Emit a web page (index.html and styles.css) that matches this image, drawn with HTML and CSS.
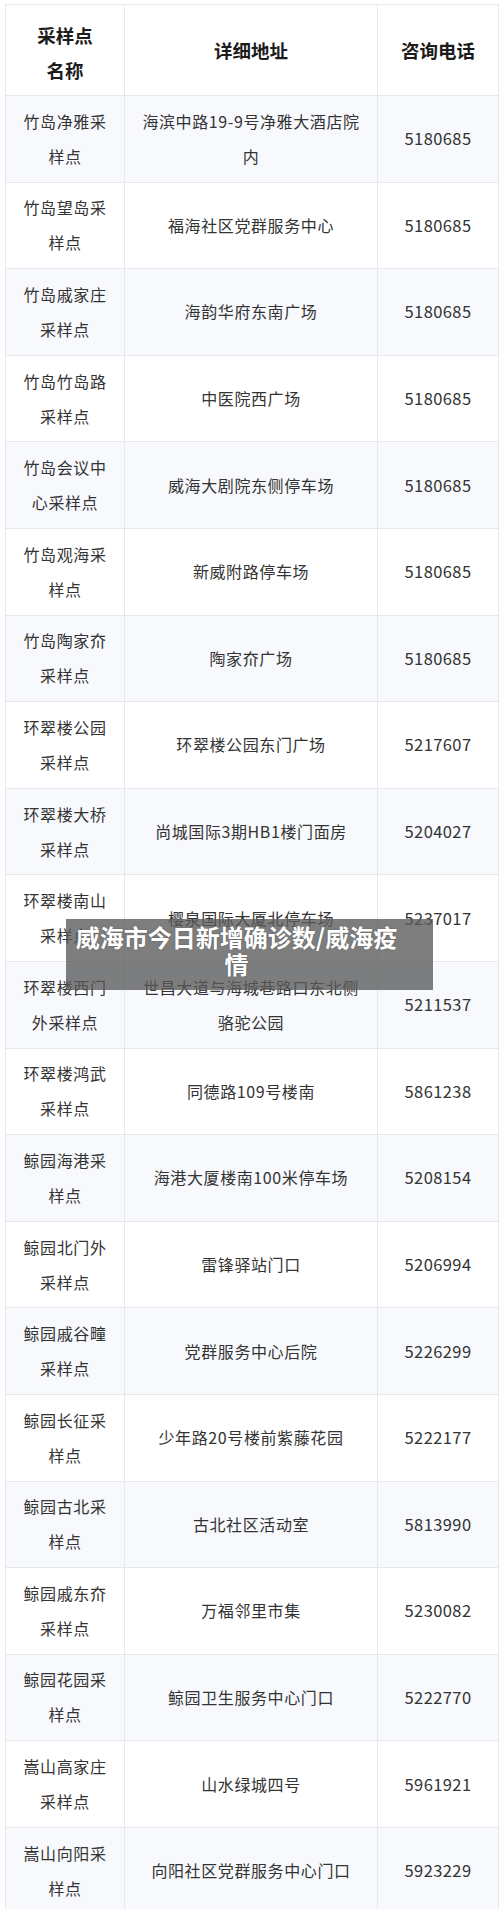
FILE: index.html
```html
<!DOCTYPE html>
<html lang="zh-CN">
<head>
<meta charset="utf-8">
<title>威海市今日新增确诊数</title>
<link rel="stylesheet" href="styles.css">
</head>
<body>
<div class="page">
  <table class="sites">
    <colgroup>
      <col class="c-name">
      <col class="c-addr">
      <col class="c-tel">
    </colgroup>
    <thead>
      <tr>
        <th class="h-name">采样点名称</th>
        <th>详细地址</th>
        <th>咨询电话</th>
      </tr>
    </thead>
    <tbody>
      <tr><td class="name">竹岛净雅采样点</td><td class="addr">海滨中路19-9号净雅大酒店院内</td><td class="tel">5180685</td></tr>
      <tr><td class="name">竹岛望岛采样点</td><td class="addr">福海社区党群服务中心</td><td class="tel">5180685</td></tr>
      <tr><td class="name">竹岛戚家庄采样点</td><td class="addr">海韵华府东南广场</td><td class="tel">5180685</td></tr>
      <tr><td class="name">竹岛竹岛路采样点</td><td class="addr">中医院西广场</td><td class="tel">5180685</td></tr>
      <tr><td class="name">竹岛会议中心采样点</td><td class="addr">威海大剧院东侧停车场</td><td class="tel">5180685</td></tr>
      <tr><td class="name">竹岛观海采样点</td><td class="addr">新威附路停车场</td><td class="tel">5180685</td></tr>
      <tr><td class="name">竹岛陶家夼采样点</td><td class="addr">陶家夼广场</td><td class="tel">5180685</td></tr>
      <tr><td class="name">环翠楼公园采样点</td><td class="addr">环翠楼公园东门广场</td><td class="tel">5217607</td></tr>
      <tr><td class="name">环翠楼大桥采样点</td><td class="addr">尚城国际3期HB1楼门面房</td><td class="tel">5204027</td></tr>
      <tr><td class="name">环翠楼南山采样点</td><td class="addr">樱泉国际大厦北停车场</td><td class="tel">5237017</td></tr>
      <tr><td class="name">环翠楼西门外采样点</td><td class="addr">世昌大道与海城巷路口东北侧骆驼公园</td><td class="tel">5211537</td></tr>
      <tr><td class="name">环翠楼鸿武采样点</td><td class="addr">同德路109号楼南</td><td class="tel">5861238</td></tr>
      <tr><td class="name">鲸园海港采样点</td><td class="addr">海港大厦楼南100米停车场</td><td class="tel">5208154</td></tr>
      <tr><td class="name">鲸园北门外采样点</td><td class="addr">雷锋驿站门口</td><td class="tel">5206994</td></tr>
      <tr><td class="name">鲸园戚谷疃采样点</td><td class="addr">党群服务中心后院</td><td class="tel">5226299</td></tr>
      <tr><td class="name">鲸园长征采样点</td><td class="addr">少年路20号楼前紫藤花园</td><td class="tel">5222177</td></tr>
      <tr><td class="name">鲸园古北采样点</td><td class="addr">古北社区活动室</td><td class="tel">5813990</td></tr>
      <tr><td class="name">鲸园戚东夼采样点</td><td class="addr">万福邻里市集</td><td class="tel">5230082</td></tr>
      <tr><td class="name">鲸园花园采样点</td><td class="addr">鲸园卫生服务中心门口</td><td class="tel">5222770</td></tr>
      <tr><td class="name">嵩山高家庄采样点</td><td class="addr">山水绿城四号</td><td class="tel">5961921</td></tr>
      <tr><td class="name">嵩山向阳采样点</td><td class="addr">向阳社区党群服务中心门口</td><td class="tel">5923229</td></tr>
    </tbody>
  </table>
  <div class="caption">威海市今日新增确诊数/威海疫<br>情</div>
</div>
</body>
</html>
```

FILE: styles.css
```css
html, body {
  margin: 0;
  padding: 0;
  background: #ffffff;
}

body {
  font-family: "Noto Sans CJK SC", "Noto Sans", sans-serif;
  color: #333333;
}

.page {
  position: relative;
  width: 500px;
  height: 1909px;
  overflow: hidden;
  padding: 4px 0 0 5px;
  box-sizing: border-box;
}

.sites {
  border-collapse: collapse;
  table-layout: fixed;
  width: 493px;
}

.c-name { width: 119px; }
.c-addr { width: 253px; }
.c-tel { width: 121px; }

.sites th,
.sites td {
  border: 1px solid #e6e8eb;
  text-align: center;
  vertical-align: middle;
  padding: 0;
}

.sites th {
  height: 84px;
  font-size: 18.5px;
  font-weight: 700;
  line-height: 35px;
  color: #1c1c1c;
  background: #ffffff;
}

.sites th.h-name {
  padding: 6px 25px 0;
}

.sites td {
  height: 85.6px;
  font-size: 16px;
  letter-spacing: 0.6px;
  line-height: 35px;
  color: #333333;
}

.sites td.name {
  padding: 0 14px;
}

.sites td.addr {
  padding: 0 14px;
}

.sites td.tel {
  font-size: 16.5px;
  letter-spacing: 0.4px;
}

.sites tbody tr:nth-child(odd) td {
  background: #f7f9fc;
}

.sites tbody tr:nth-child(even) td {
  background: #ffffff;
}

.caption {
  position: absolute;
  left: 66px;
  top: 919px;
  width: 367px;
  height: 71px;
  box-sizing: border-box;
  padding: 4px 26px 0 0;
  background: rgba(90, 90, 90, 0.78);
  color: #ffffff;
  font-size: 24px;
  font-weight: 700;
  line-height: 27px;
  text-align: center;
  text-shadow: 0 0 2px rgba(0, 0, 0, 0.25);
}
```
